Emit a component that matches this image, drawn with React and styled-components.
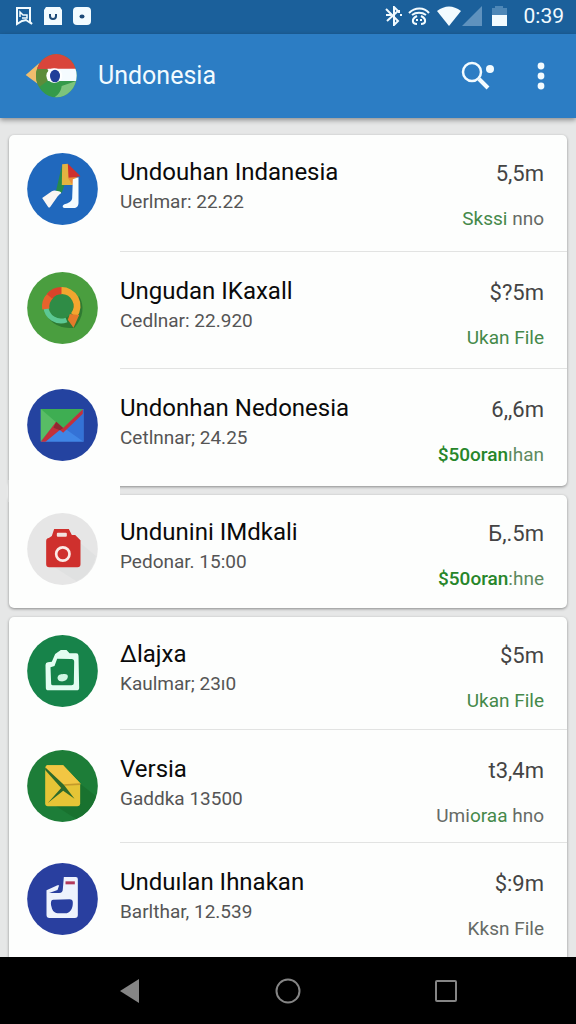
import React from "react";
import styled, { createGlobalStyle } from "styled-components";

const GlobalStyle = createGlobalStyle`
  *, *::before, *::after { box-sizing: border-box; }
  body {
    margin: 0;
    font-family: Roboto, "Liberation Sans", sans-serif;
    background: #e6e7e7;
  }
  h1, h2, p, ul { margin: 0; padding: 0; font-weight: 400; }
  button { border: 0; padding: 0; background: none; display: grid; place-items: center; }
`;

const Screen = styled.div`
  min-height: 100vh;
  display: flex;
  flex-direction: column;
`;

const StatusBar = styled.div`
  height: 34px;
  flex: none;
  display: flex;
  align-items: center;
  justify-content: space-between;
  padding: 0 12px 2px 16px;
  background: #1b609b;
  color: #f2fbff;
`;

const StatusGroup = styled.div`
  display: flex;
  align-items: center;
  gap: ${(p) => p.$gap}px;
`;

const Clock = styled.time`
  font-size: 21px;
  line-height: 24px;
  margin-left: 8px;
`;

const AppBar = styled.header`
  height: 84px;
  flex: none;
  display: flex;
  align-items: center;
  padding: 0 20px 0 25px;
  background: #2c7dc4;
  color: #f2fbff;
  box-shadow: 0 2px 5px rgba(0, 0, 0, 0.4);
  position: relative;
`;

const AppTitle = styled.h1`
  flex: 1;
  margin-left: 20px;
  font-size: 25px;
  line-height: 30px;
`;

const BarActions = styled.div`
  display: flex;
  gap: 24px;
`;

const BarButton = styled.button`
  width: ${(p) => p.$width}px;
  height: 48px;
  color: inherit;
`;

const List = styled.main`
  flex: 1;
  display: flex;
  flex-direction: column;
  gap: 9px;
  padding: 17px 9px 0;
`;

const Card = styled.ul`
  list-style: none;
  position: relative;
  background: #fdfefd;
  border-radius: 5px;
  box-shadow: 0 1px 3px rgba(0, 0, 0, 0.4);
  --row: ${(p) => (p.$roomy ? 117 : 113)}px;

  &:last-child {
    flex: 1;
    border-radius: 5px 5px 0 0;
  }

  ${(p) =>
    p.$joined &&
    `&::before {
      content: "";
      position: absolute;
      left: 0;
      top: -15px;
      width: 111px;
      height: 22px;
      background: #fdfefd;
      box-shadow: -1px 0 0 #d2d3d3;
    }`}
`;

const Row = styled.li`
  display: flex;
  min-height: var(--row);
  padding-left: 18px;
  --top: 20px;
  &:first-child { --top: 18px; }
`;

const Disc = styled.svg`
  width: 71px;
  height: 72px;
  flex: none;
  margin-top: var(--top);
  position: relative;
`;

const Body = styled.div`
  flex: 1;
  display: flex;
  justify-content: space-between;
  margin-left: 22px;
  padding: calc(var(--top) + 4px) 23px 0 0;
  border-bottom: 1px solid #e2e3e2;
  ${Row}:last-child & { border-bottom-color: transparent; }
`;

const Title = styled.h2`
  font-size: 24px;
  line-height: 30px;
  color: #0a0a0a;
`;

const Subtitle = styled.p`
  margin-top: 3px;
  font-size: 19px;
  line-height: 24px;
  color: #555;
`;

const Side = styled.div`
  text-align: right;
`;

const Price = styled.p`
  font-size: 22px;
  line-height: 34px;
  color: #444;
`;

const tones = { green: "#45894a", bold: "#27862a", gray: "#666b66", mix: "#5d8a60" };

const Status = styled.p`
  margin-top: 16px;
  font-size: 19px;
  line-height: 24px;
`;

const Tone = styled.span`
  color: ${(p) => tones[p.$tone]};
  font-weight: ${(p) => (p.$tone === "bold" ? 500 : 400)};
`;

const NavBar = styled.nav`
  height: 67px;
  flex: none;
  display: flex;
  justify-content: center;
  align-items: center;
  gap: 110px;
  background: #000;
  color: #858585;
  position: relative;
`;

const NavButton = styled.button`
  width: 48px;
  height: 48px;
  color: inherit;
`;

const RunnerIcon = () => (
  <Disc viewBox="82 72 212 216" aria-hidden="true">
    <ellipse cx="188" cy="180" rx="106" ry="108" fill="#2068bd" />
    <path d="M186 110l-18 78 18 3 8-24z" fill="#278a4c" />
    <path d="M187 106l17-2 15 64h-33z" fill="#e3b341" />
    <path d="M204 104l38 38-16 2 2 10-22-8z" fill="#cf2f2e" />
    <path d="M204 146l28-2-14 24z" fill="#eb8b3a" />
    <path d="M127 207l29-20q5-3 12-2c14 1 19 5 14 9-5 3-9 8-12 13l-19 27q-3 3-6 0z" fill="#faf6f3" />
    <path d="M219 151l17-6v76c0 10-6 16-14 16h-28c-7 0-7-8 0-11 14-3 22-10 23-18z" fill="#f5fcff" />
  </Disc>
);

const RingIcon = () => (
  <Disc viewBox="82 427 212 216" aria-hidden="true">
    <ellipse cx="188" cy="535" rx="106" ry="108" fill="#4a9e3f" />
    <path d="M238 500c16 28 14 62-14 94-32 4-66-6-84-38z" fill="#2f7a32" />
    <circle cx="184" cy="530" r="37" fill="#2f8c46" />
    <g fill="none">
      <path d="M138 532a46 46 0 0 0 62 39" stroke="#5cc894" strokeWidth="15" />
      <path d="M182 483a46 46 0 0 1 40 74" stroke="#f2a62f" strokeWidth="21" />
      <path d="M138 538a46 46 0 0 1 14-40" stroke="#e8632c" strokeWidth="22" />
      <path d="M149 500a46 46 0 0 1 36-17" stroke="#d9432a" strokeWidth="22" />
    </g>
    <path d="M210 553l28 3-17 38-17-24z" fill="#e57a2a" />
  </Disc>
);

const MailChartIcon = () => (
  <Disc viewBox="82 61 212 216" aria-hidden="true">
    <ellipse cx="188" cy="169" rx="106" ry="108" fill="#2443a0" />
    <path d="M123 121h128v98H123z" fill="#4086e6" />
    <path d="M192 177l59-45v87z" fill="#3472d6" />
    <path d="M123 121h127l-59 58-22-18-46 58z" fill="#3eae52" />
    <path d="M123 121l46 40-46 56z" fill="#58bd65" />
    <path d="M123 219l46-60 21 19 59-56v13l-59 57-10-8-43 35z" fill="#c3313b" />
    <path d="M169 159l21 19-10 7-19-8z" fill="#8f2a31" />
  </Disc>
);

const CameraIcon = () => (
  <Disc viewBox="82 424 212 216" aria-hidden="true">
    <ellipse cx="188" cy="532" rx="106" ry="108" fill="#e6e6e6" />
    <path d="M242 515l46 38a106 108 0 0 1-58 76l-66-42z" fill="#e0e1e1" />
    <path d="M163 472h44l9 18h10l16 16v72q0 9-9 9h-85q-9 0-9-9v-70q0-8 8-9l9-6z" fill="#cf302d" />
    <rect x="171" y="483" width="30" height="12" rx="3" fill="#f3e3df" />
    <circle cx="189" cy="547" r="20" fill="none" stroke="#fbeae6" strokeWidth="8" />
  </Disc>
);

const JugIcon = () => (
  <Disc viewBox="82 71 212 216" aria-hidden="true">
    <ellipse cx="188" cy="179" rx="106" ry="108" fill="#17834a" />
    <path
      d="M166 128l17-12h17l9 10h20q7 0 7 7l2 96q0 8-8 8h-84q-8 0-8-8l-1-68q0-7 7-8l12-2zM172 142l-8 22-12 4 2 49q0 5 5 5h56q7 0 7-6l1-65q0-8-8-8z"
      fill="#e4fdf2"
      fillRule="evenodd"
    />
    <path d="M173 200c1-10 9-11 17-12 10-1 15 1 14 9-2 10-10 14-21 13q-9-1-10-10z" fill="#d0f7e3" />
  </Disc>
);

const NoteIcon = () => (
  <Disc viewBox="82 419 212 216" aria-hidden="true">
    <ellipse cx="188" cy="527" rx="106" ry="108" fill="#1d7d38" />
    <path d="M241 520l48 38a106 108 0 0 1-60 68l-60-38z" fill="#19722f" />
    <path d="M141 465h49l51 54v60q0 9-9 9h-88q-8 0-8-9V470z" fill="#e6c436" />
    <path d="M141 465h49l51 54-50 3-54-48z" fill="#f2c643" />
    <path d="M192 522l49-3v5l-46 2z" fill="#c49a2c" />
    <path d="M136 471l56 52 32 42-34-24-46 37 40-45-48-54z" fill="#2d6a2b" />
  </Disc>
);

const CanisterIcon = () => (
  <Disc viewBox="82 77 212 216" aria-hidden="true">
    <ellipse cx="188" cy="185" rx="106" ry="108" fill="#293f9f" />
    <path
      d="M192 119h36q6 0 6 6v108q0 9-9 9h-76q-9 0-9-9v-74l33-15h5l-5 14-25 9h30q11 0 11-12zM160 187c-7 0-8 10-5 21 3 14 10 20 23 20h18c15 0 23-14 23-32q0-10-10-10z"
      fill="#eef3fd"
      fillRule="evenodd"
    />
    <path d="M197 132h28v9h-28z" fill="#b33a5b" />
  </Disc>
);

const Logo = () => (
  <svg width="53" height="46" viewBox="74 163 159 138" aria-hidden="true">
    <clipPath id="logo-disc">
      <ellipse cx="168" cy="231" rx="61" ry="65" />
    </clipPath>
    <path d="M118 192L76 229l38 28z" fill="#f0bd6d" />
    <g clipPath="url(#logo-disc)">
      <path d="M100 160h135v140H100z" fill="#349a4a" />
      <path d="M100 160h135v52H100z" fill="#d9453b" />
      <path d="M142 210h90v37h-90z" fill="#f5fbff" />
      <path d="M100 210l44 4-4 34-22 16-18-6z" fill="#5d8c3a" />
      <path d="M184 262l46-16v54h-76c18-8 28-20 30-38z" fill="#7cc47d" />
    </g>
    <ellipse cx="162" cy="231" rx="24" ry="22" fill="#fff" />
    <ellipse cx="164" cy="232" rx="15" ry="19" fill="#213f99" />
  </svg>
);

const cards = [
  {
    roomy: true,
    rows: [
      { Icon: RunnerIcon, title: "Undouhan Indanesia", sub: "Uerlmar: 22.22", price: "5,5m", status: [["green", "Skssi"], ["gray", " nno"]] },
      { Icon: RingIcon, title: "Ungudan IKaxall", sub: "Cedlnar: 22.920", price: "$?5m", status: [["green", "Ukan File"]] },
      { Icon: MailChartIcon, title: "Undonhan Nedonesia", sub: "Cetlnnar; 24.25", price: "6,,6m", status: [["bold", "$50oran"], ["mix", "ıhan"]] },
    ],
  },
  {
    joined: true,
    rows: [
      { Icon: CameraIcon, title: "Undunini IMdkali", sub: "Pedonar. 15:00", price: "Б,.5m", status: [["bold", "$50oran"], ["mix", ":hne"]] },
    ],
  },
  {
    rows: [
      { Icon: JugIcon, title: "Δlajxa", sub: "Kaulmar; 23ı0", price: "$5m", status: [["green", "Ukan File"]] },
      { Icon: NoteIcon, title: "Versia", sub: "Gaddka 13500", price: "t3,4m", status: [["gray", "Umi"], ["green", "oraa"], ["gray", " hno"]] },
      { Icon: CanisterIcon, title: "Unduılan Ihnakan", sub: "Barlthar, 12.539", price: "$:9m", status: [["gray", "Kksn File"]] },
    ],
  },
];

export default function App() {
  return (
    <Screen>
      <GlobalStyle />
      <StatusBar>
        <StatusGroup $gap={11}>
          <svg width="17" height="20" viewBox="0 0 17 20" fill="none" stroke="currentColor" strokeWidth="2" aria-hidden="true">
            <path d="M1 2h13v14l2 2-6-4-4 1-5 3z" />
            <path d="M4 11V6l3 3h4v3H6" strokeWidth="1.5" />
          </svg>
          <svg width="18" height="18" viewBox="0 0 18 18" aria-hidden="true">
            <path d="M2 0h14l2 3v15H0V3z" fill="currentColor" />
            <path d="M6 7v2q0 3 3 3t3-3V7" fill="none" stroke="#1b4a78" strokeWidth="2" />
          </svg>
          <svg width="18" height="18" viewBox="0 0 18 18" aria-hidden="true">
            <rect width="18" height="18" rx="4" fill="currentColor" />
            <ellipse cx="9" cy="9.500" rx="2.500" ry="2" fill="#1b4a78" />
          </svg>
        </StatusGroup>
        <StatusGroup $gap={5}>
          <svg width="17" height="20" viewBox="0 0 17 20" fill="none" stroke="currentColor" strokeWidth="2" aria-hidden="true">
            <path d="M1 3l12 12-4 4V1l4 4L2 15M1 9h5" />
            <path d="M14 4v3M15 9h2" />
          </svg>
          <svg width="24" height="20" viewBox="0 0 24 20" fill="none" stroke="currentColor" strokeWidth="2" aria-hidden="true">
            <path d="M2 7c6-6 15-6 20 0M5 9c4-3 10-3 14 0" />
            <path d="M10 10c-6 3-5 8 0 8M14 10c6 3 5 8 0 8M9 14h2M13 14h2" />
          </svg>
          <StatusGroup $gap={0}>
            <svg width="26" height="20" viewBox="0 0 26 20" aria-hidden="true">
              <path d="M1 5q12-9 24 0L13 20z" fill="currentColor" />
            </svg>
            <svg width="20" height="20" viewBox="0 0 20 20" aria-hidden="true">
              <path d="M20 0v20H0z" fill="#5f92be" />
            </svg>
          </StatusGroup>
          <svg width="24" height="20" viewBox="0 0 24 20" aria-hidden="true">
            <path d="M8 0h8v2h4v8H5V2h3z" fill="#4e87b7" />
            <path d="M5 9h15v11H5z" fill="currentColor" />
          </svg>
          <Clock>0:39</Clock>
        </StatusGroup>
      </StatusBar>

      <AppBar>
        <Logo />
        <AppTitle>Undonesia</AppTitle>
        <BarActions>
          <BarButton type="button" aria-label="Search" $width={48}>
            <svg width="34" height="30" viewBox="0 0 34 30" fill="none" stroke="currentColor" aria-hidden="true">
              <circle cx="11" cy="11" r="9" strokeWidth="2.500" />
              <path d="M18 18l9 9" strokeWidth="4" />
              <circle cx="29" cy="8" r="4" fill="currentColor" stroke="none" />
            </svg>
          </BarButton>
          <BarButton type="button" aria-label="More options" $width={30}>
            <svg width="8" height="28" viewBox="0 0 8 28" fill="currentColor" aria-hidden="true">
              <circle cx="4" cy="4" r="3.400" />
              <circle cx="4" cy="14" r="3.400" />
              <circle cx="4" cy="24" r="3.400" />
            </svg>
          </BarButton>
        </BarActions>
      </AppBar>

      <List>
        {cards.map((card, i) => (
          <Card key={i} $roomy={card.roomy} $joined={card.joined}>
            {card.rows.map(({ Icon, title, sub, price, status }) => (
              <Row key={title}>
                <Icon />
                <Body>
                  <div>
                    <Title>{title}</Title>
                    <Subtitle>{sub}</Subtitle>
                  </div>
                  <Side>
                    <Price>{price}</Price>
                    <Status>
                      {status.map(([tone, text]) => (
                        <Tone key={text} $tone={tone}>{text}</Tone>
                      ))}
                    </Status>
                  </Side>
                </Body>
              </Row>
            ))}
          </Card>
        ))}
      </List>

      <NavBar aria-label="System">
        <NavButton type="button" aria-label="Back">
          <svg width="20" height="26" viewBox="0 0 20 26" aria-hidden="true">
            <path d="M19 1v24L0 13z" fill="currentColor" />
          </svg>
        </NavButton>
        <NavButton type="button" aria-label="Home">
          <svg width="26" height="26" viewBox="0 0 26 26" aria-hidden="true">
            <circle cx="13" cy="13" r="11.500" fill="none" stroke="currentColor" strokeWidth="2" />
          </svg>
        </NavButton>
        <NavButton type="button" aria-label="Recent apps">
          <svg width="22" height="22" viewBox="0 0 22 22" aria-hidden="true">
            <rect x="1" y="1" width="20" height="20" rx="1" fill="none" stroke="currentColor" strokeWidth="2" />
          </svg>
        </NavButton>
      </NavBar>
    </Screen>
  );
}
